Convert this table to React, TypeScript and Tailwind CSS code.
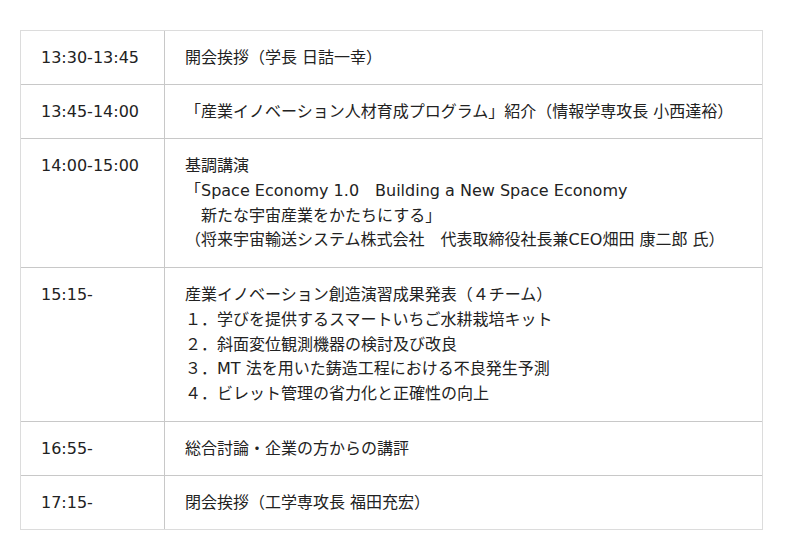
import React from "react";

const rows: { time: string; lines: string[]; h: string }[] = [
  { time: "13:30-13:45", lines: ["開会挨拶（学長 日詰一幸）"], h: "h-[53px]" },
  {
    time: "13:45-14:00",
    lines: ["「産業イノベーション人材育成プログラム」紹介（情報学専攻長 小西達裕）"],
    h: "h-[54px]",
  },
  {
    time: "14:00-15:00",
    lines: [
      "基調講演",
      "「Space Economy 1.0　Building a New Space Economy",
      "　新たな宇宙産業をかたちにする」",
      "（将来宇宙輸送システム株式会社　代表取締役社長兼CEO畑田 康二郎 氏）",
    ],
    h: "h-[129px]",
  },
  {
    time: "15:15-",
    lines: [
      "産業イノベーション創造演習成果発表（４チーム）",
      "１．学びを提供するスマートいちご水耕栽培キット",
      "２．斜面変位観測機器の検討及び改良",
      "３．MT 法を用いた鋳造工程における不良発生予測",
      "４．ビレット管理の省力化と正確性の向上",
    ],
    h: "h-[154px]",
  },
  { time: "16:55-", lines: ["総合討論・企業の方からの講評"], h: "h-[54px]" },
  { time: "17:15-", lines: ["閉会挨拶（工学専攻長 福田充宏）"], h: "h-[54px]" },
];

export default function App() {
  return (
    <div
      className="w-[800px] h-[560px] bg-white pt-[30px] pl-[20px]"
      style={{ fontFamily: '"DejaVu Sans", "Noto Sans CJK JP", sans-serif' }}
    >
      <div className="w-[743px] border border-[#dcdcdc] text-[16px] text-[#222] leading-[24.75px]">
        {rows.map((r, i) => (
          <div
            key={i}
            className={`flex box-border ${r.h} ${i > 0 ? "border-t border-[#c8c8c8]" : ""}`}
          >
            <div className="w-[144px] shrink-0 border-r border-[#c8c8c8] pl-[20px] pt-[15px] whitespace-nowrap">
              {r.time}
            </div>
            <div className="flex-1 pl-[20px] pt-[15px]">
              {r.lines.map((l, j) => (
                <div key={j} className="whitespace-pre">
                  {l}
                </div>
              ))}
            </div>
          </div>
        ))}
      </div>
    </div>
  );
}
